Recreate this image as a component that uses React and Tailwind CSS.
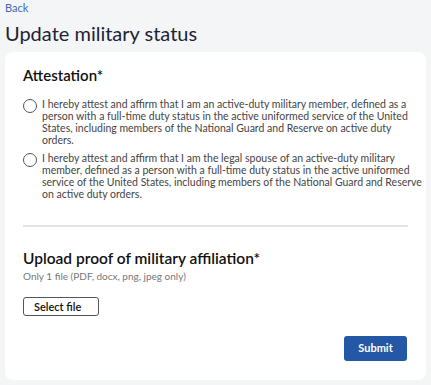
import React, { useState } from 'react';

const options = [
  [
    'I hereby attest and affirm that I am an active-duty military member, defined as a',
    'person with a full-time duty status in the active uniformed service of the United',
    'States, including members of the National Guard and Reserve on active duty',
    'orders.',
  ],
  [
    'I hereby attest and affirm that I am the legal spouse of an active-duty military',
    'member, defined as a person with a full-time duty status in the active uniformed',
    'service of the United States, including members of the National Guard and Reserve',
    'on active duty orders.',
  ],
];

const App = () => {
  const [selected, setSelected] = useState(null);

  return (
    <div className="min-h-[385px] w-[431px] bg-[#f4f5f7] px-[5px] pt-[1px] font-['Lato',sans-serif]">
      <a className="block text-[11px] leading-[14px] text-[#3b6bb3]">Back</a>
      <h1 className="mt-[6px] text-[20px] leading-[24px] text-[#1c2434]">Update military status</h1>

      <div className="mt-[7px] h-[328px] w-[421px] rounded-[8px] bg-white px-[18px] pt-[13px]">
        <h2 className="text-[15px] font-semibold leading-[20px] text-[#111]">Attestation*</h2>

        <div className="mt-[13px] flex flex-col gap-[6px]">
          {options.map((lines, i) => (
            <label key={i} className="flex cursor-pointer items-start gap-[5px]">
              <span
                onClick={() => setSelected(i)}
                className="mt-[1px] flex h-[14px] w-[14px] shrink-0 items-center justify-center rounded-full border border-[#555] bg-white"
              >
                {selected === i && <span className="h-[8px] w-[8px] rounded-full bg-[#2557a7]" />}
              </span>
              <span className="whitespace-nowrap text-[10.5px] leading-[12px] text-[#444]">
                {lines.map((line, j) => (
                  <span key={j} className="block">{line}</span>
                ))}
              </span>
            </label>
          ))}
        </div>

        <hr className="mt-[25px] border-t-[2px] border-[#e4e4e4]" />

        <h2 className="mt-[21px] text-[15.5px] font-semibold leading-[20px] text-[#111]">Upload proof of military affiliation*</h2>
        <p className="mt-[2px] text-[10px] leading-[12px] text-[#777]">Only 1 file (PDF, docx, png, jpeg only)</p>

        <button className="mt-[15px] h-[19px] w-[76px] rounded-[3px] border border-[#555] pl-[10px] text-left text-[11px] font-semibold leading-[16px] text-[#111]">
          Select file
        </button>

        <div className="mt-[19px] flex justify-end pr-[1px]">
          <button className="h-[25px] w-[63px] rounded-[3px] bg-[#2557a7] text-[11px] font-bold text-white">Submit</button>
        </div>
      </div>
    </div>
  );
};

export default App;
